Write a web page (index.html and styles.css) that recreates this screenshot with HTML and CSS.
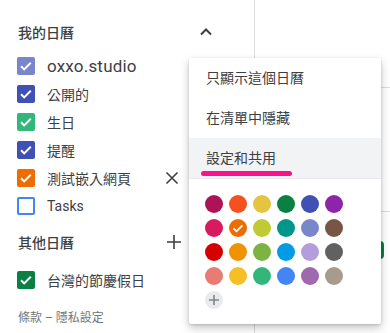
FILE: index.html
```html
<!DOCTYPE html>
<html>
    <head>
        <title>Calendar</title>
        <meta charset="UTF-8">
        <meta name="viewport" content="width=device-width, initial-scale=1">
        <link rel="stylesheet" href="styles.css">
    </head>
    <body>
        <div id="app">
            <div id="sidebar">
                <div class="section-head">
                    <span>我的日曆</span>
                    <svg class="icon" width="24" height="24" viewBox="0 0 24 24"><path d="M7 14.5l5-5 5 5" fill="none" stroke="#3c4043" stroke-width="2"/></svg>
                </div>
                <div class="cal-item">
                    <span class="box" style="background:#7986cb"><svg viewBox="0 0 18 18"><path d="M4 9.2l3.2 3.2 6.6-6.6"/></svg></span>
                    <span class="name big">oxxo.studio</span>
                </div>
                <div class="cal-item">
                    <span class="box" style="background:#3f51b5"><svg viewBox="0 0 18 18"><path d="M4 9.2l3.2 3.2 6.6-6.6"/></svg></span>
                    <span class="name">公開的</span>
                </div>
                <div class="cal-item">
                    <span class="box" style="background:#33b679"><svg viewBox="0 0 18 18"><path d="M4 9.2l3.2 3.2 6.6-6.6"/></svg></span>
                    <span class="name">生日</span>
                </div>
                <div class="cal-item">
                    <span class="box" style="background:#3f51b5"><svg viewBox="0 0 18 18"><path d="M4 9.2l3.2 3.2 6.6-6.6"/></svg></span>
                    <span class="name">提醒</span>
                </div>
                <div class="cal-item">
                    <span class="box" style="background:#ef6c00"><svg viewBox="0 0 18 18"><path d="M4 9.2l3.2 3.2 6.6-6.6"/></svg></span>
                    <span class="name">測試嵌入網頁</span>
                    <svg class="close" width="14" height="14" viewBox="0 0 14 14"><path d="M1.5 1.5l11 11M12.5 1.5l-11 11" stroke="#3c4043" stroke-width="1.6"/></svg>
                </div>
                <div class="cal-item">
                    <span class="box empty"></span>
                    <span class="name">Tasks</span>
                </div>

                <div class="section-head other">
                    <span>其他日曆</span>
                    <svg class="icon plus" width="24" height="24" viewBox="0 0 24 24"><path d="M12 5v14M5 12h14" stroke="#3c4043" stroke-width="1.6"/></svg>
                </div>
                <div class="cal-item">
                    <span class="box" style="background:#0b8043"><svg viewBox="0 0 18 18"><path d="M4 9.2l3.2 3.2 6.6-6.6"/></svg></span>
                    <span class="name">台灣的節慶假日</span>
                </div>

                <p class="terms">條款 – 隱私設定</p>
            </div>

            <div id="main">
                <div class="row head-row"></div>
                <div class="row"></div>
                <div class="row"><span class="event"></span></div>
            </div>

            <div id="menu">
                <div class="menu-item">只顯示這個日曆</div>
                <div class="menu-item">在清單中隱藏</div>
                <div class="menu-item active">設定和共用<span class="mark"></span></div>
                <div class="colors">
                    <span class="dot" style="background:#ad1457"></span>
                    <span class="dot" style="background:#f4511e"></span>
                    <span class="dot" style="background:#e4c441"></span>
                    <span class="dot" style="background:#0b8043"></span>
                    <span class="dot" style="background:#3f51b5"></span>
                    <span class="dot" style="background:#8e24aa"></span>
                    <span class="dot" style="background:#d81b60"></span>
                    <span class="dot" style="background:#ef6c00"><svg viewBox="0 0 18 18"><path d="M4.5 9.3l3 3 6-6" fill="none" stroke="#fff" stroke-width="1.8"/></svg></span>
                    <span class="dot" style="background:#c0ca33"></span>
                    <span class="dot" style="background:#009688"></span>
                    <span class="dot" style="background:#7986cb"></span>
                    <span class="dot" style="background:#795548"></span>
                    <span class="dot" style="background:#d50000"></span>
                    <span class="dot" style="background:#f09300"></span>
                    <span class="dot" style="background:#7cb342"></span>
                    <span class="dot" style="background:#039be5"></span>
                    <span class="dot" style="background:#b39ddb"></span>
                    <span class="dot" style="background:#616161"></span>
                    <span class="dot" style="background:#e67c73"></span>
                    <span class="dot" style="background:#f6bf26"></span>
                    <span class="dot" style="background:#33b679"></span>
                    <span class="dot" style="background:#4285f4"></span>
                    <span class="dot" style="background:#9e69af"></span>
                    <span class="dot" style="background:#a79b8e"></span>
                    <span class="dot add"><svg viewBox="0 0 18 18"><path d="M9 4v10M4 9h10" stroke="#80868b" stroke-width="1.6"/></svg></span>
                </div>
            </div>
        </div>
    </body>
</html>
```

FILE: styles.css
```css
html, body {
    margin: 0;
    background: #fff;
}

body {
    font-family: Roboto, "Noto Sans CJK TC", sans-serif;
    color: #3c4043;
    font-size: 14px;
    overflow: hidden;
}

#app {
    position: relative;
    display: flex;
    width: 390px;
    height: 333px;
    overflow: hidden;
}

#sidebar {
    width: 254px;
    flex: none;
    padding-top: 12px;
}

.section-head {
    display: flex;
    align-items: center;
    height: 40px;
    padding-left: 18px;
    width: 200px;
    font-weight: 500;
    justify-content: space-between;
}

.section-head.other {
    height: 44px;
    width: 168px;
    margin-bottom: 2px;
}

.cal-item {
    display: flex;
    align-items: center;
    height: 28px;
    padding-left: 17px;
}

.box {
    width: 18px;
    height: 18px;
    border-radius: 2px;
    flex: none;
    display: flex;
}

.box svg {
    width: 18px;
    height: 18px;
}

.box path {
    fill: none;
    stroke: #fff;
    stroke-width: 2;
}

.box.empty {
    box-sizing: border-box;
    border: 2px solid #4285f4;
}

.name {
    margin-left: 12px;
    width: 106px;
}

.name.big {
    font-size: 17px;
    letter-spacing: 0.2px;
}

.close {
    margin-left: 12px;
}

.terms {
    margin: 16px 0 0 18px;
    font-size: 12px;
    line-height: 16px;
    color: #70757a;
}

#main {
    flex: 1;
    border-left: 1px solid #dadce0;
}

.row {
    height: 124px;
    border-bottom: 1px solid #dadce0;
    box-sizing: border-box;
}

.row.head-row {
    height: 88px;
}

.event {
    display: block;
    margin: 29px 0 0 115px;
    width: 14px;
    height: 18px;
    border-radius: 4px;
    background: #0b8043;
}

#menu {
    position: absolute;
    left: 189px;
    top: 58px;
    width: 192px;
    height: 266px;
    background: #fff;
    border-radius: 2px;
    box-shadow: 0 4px 10px rgba(0, 0, 0, 0.22), 0 1px 3px rgba(0, 0, 0, 0.15);
}

.menu-item {
    position: relative;
    height: 40px;
    line-height: 40px;
    padding-left: 17px;
}

.menu-item.active {
    background: #f1f3f4;
    border-bottom: 1px solid #e8eaed;
}

.mark {
    position: absolute;
    left: 12px;
    top: 33px;
    width: 91px;
    height: 5px;
    border-radius: 3px;
    background: #f7148a;
}

.colors {
    display: grid;
    grid-template-columns: repeat(6, 18px);
    gap: 6px;
    padding: 16px 0 0 16px;
}

.dot {
    width: 18px;
    height: 18px;
    border-radius: 50%;
    display: flex;
}

.dot svg {
    width: 18px;
    height: 18px;
}

.dot.add {
    background: #e8eaed;
}
```
